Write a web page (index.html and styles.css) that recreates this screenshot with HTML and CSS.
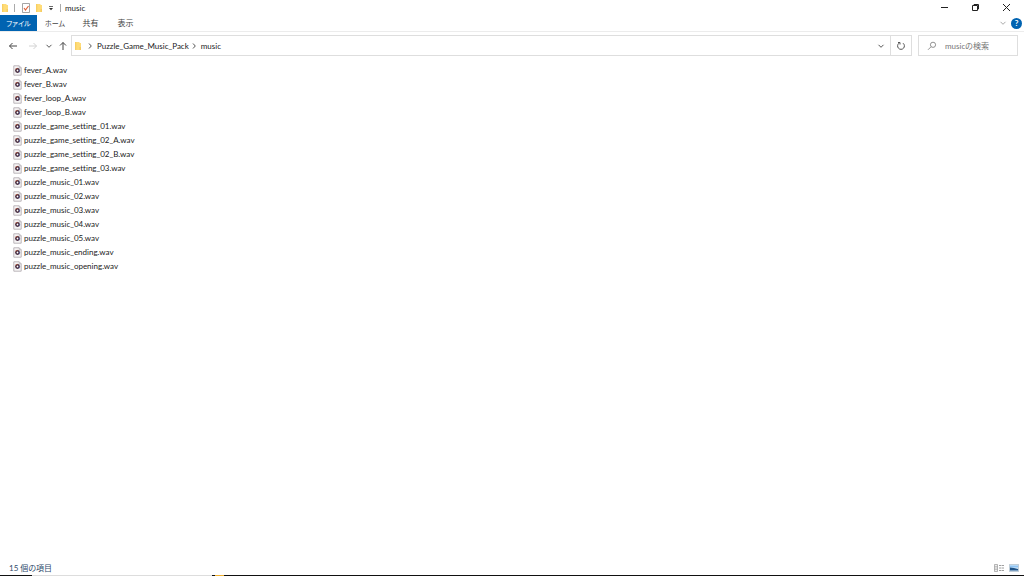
FILE: index.html
```
<!DOCTYPE html>
<html lang="ja">

<head>
  <meta charset="UTF-8">
  <meta name="viewport" content="width=device-width, initial-scale=1.0">
  <title>music</title>
  <link rel="stylesheet" href="styles.css">
</head>

<body>
  <!-- 共通アイコン -->
  <svg class="defs" aria-hidden="true">
    <symbol id="folder" viewBox="0 0 8 10">
      <path d="M1 1h4.500v1H7v7H1z" fill="#ffdc78" />
      <path d="M1 1h1.300v8H1z" fill="#f8cf62" />
      <path d="M5.500 6h1.500v3H5.500z" fill="#f6cc62" />
    </symbol>
    <symbol id="wav" viewBox="0 0 9 11">
      <path d="M.8.8h5.400l2 2v7.400h-7.400z" fill="#f7f5f6" stroke="#b5afb3" stroke-width=".9" />
      <path d="M6.200.8v2h2" fill="none" stroke="#b5afb3" stroke-width=".7" />
      <circle cx="4.500" cy="5.500" r="2.400" fill="#43283c" />
      <path d="M2.500 4.500a2.300 2.300 0 0 1 2-1.200" fill="none" stroke="#d0643c" stroke-width=".8" />
      <path d="M6.700 4.900a2.300 2.300 0 0 1-.8 2.400" fill="none" stroke="#5063a8" stroke-width=".8" />
      <circle cx="4.500" cy="5.500" r=".9" fill="#fff" />
    </symbol>
    <symbol id="chevron-down" viewBox="0 0 8 8">
      <path d="M1.500 2.800L4 5.300l2.500-2.500" fill="none" stroke="currentColor" />
    </symbol>
    <symbol id="chevron-right" viewBox="0 0 8 8">
      <path d="M3 1.500L5.300 4 3 6.500" fill="none" stroke="currentColor" />
    </symbol>
  </svg>

  <!-- タイトルバー -->
  <header class="titlebar">
    <div class="quick">
      <svg class="folder"><use href="#folder" /></svg>
      <span class="sep"></span>
      <button class="check" aria-label="プロパティ">
        <svg width="10" height="12" viewBox="0 0 10 12">
          <path d="M1.500 1.500h7v9h-7z" fill="#fff" stroke="#8e8e8e" stroke-width=".8" />
          <path d="M3 6l1.500 2L7.500 4" fill="none" stroke="#e0623a" stroke-width="1.200" />
        </svg>
      </button>
      <button class="new-folder" aria-label="新しいフォルダー"><svg class="folder"><use href="#folder" /></svg></button>
      <button class="customize" aria-label="カスタマイズ">
        <svg width="6" height="8" viewBox="0 0 6 8">
          <path d="M1 2.500h4" stroke="#444" stroke-width=".8" />
          <path d="M1 4h4L3 6.300z" fill="#333" />
        </svg>
      </button>
      <span class="sep"></span>
    </div>
    <h1 class="title">music</h1>
    <div class="window-buttons">
      <button aria-label="最小化">
        <svg width="9" height="9" viewBox="0 0 9 9"><path d="M1 4.500h7" stroke="#222" /></svg>
      </button>
      <button aria-label="元に戻す">
        <svg width="9" height="9" viewBox="0 0 9 9" fill="none" stroke="#222"><path d="M1.500 2.500h5v5h-5zM3 2.500v-1h4.500V6h-1" /></svg>
      </button>
      <button aria-label="閉じる">
        <svg width="9" height="9" viewBox="0 0 9 9"><path d="M1 1l7 7M8 1L1 8" stroke="#222" /></svg>
      </button>
    </div>
  </header>

  <!-- リボンのタブ -->
  <nav class="tabs">
    <button class="tab tab-file">ファイル</button>
    <button class="tab tab-home">ホーム</button>
    <button class="tab">共有</button>
    <button class="tab">表示</button>
    <div class="tabs-right">
      <button class="expand" aria-label="リボンの展開"><svg class="icon"><use href="#chevron-down" /></svg></button>
      <button class="help" aria-label="ヘルプ">?</button>
    </div>
  </nav>

  <!-- アドレスバー -->
  <div class="toolbar">
    <div class="nav">
      <button class="arrow" aria-label="戻る">
        <svg width="10" height="10" viewBox="0 0 10 10"><path d="M9 5H1.500M4.500 2l-3 3 3 3" fill="none" stroke="#444" /></svg>
      </button>
      <button class="arrow disabled" aria-label="進む" disabled>
        <svg width="10" height="10" viewBox="0 0 10 10"><path d="M1 5h7.500M5.500 2l3 3-3 3" fill="none" stroke="#d2d2d2" /></svg>
      </button>
      <button class="recent" aria-label="最近表示した場所"><svg class="icon"><use href="#chevron-down" /></svg></button>
      <button class="arrow" aria-label="上へ">
        <svg width="10" height="10" viewBox="0 0 10 10"><path d="M5 9V1.500M2 4.500l3-3 3 3" fill="none" stroke="#444" /></svg>
      </button>
    </div>
    <div class="address">
      <svg class="folder"><use href="#folder" /></svg>
      <svg class="icon"><use href="#chevron-right" /></svg>
      <a class="crumb" href="#">Puzzle_Game_Music_Pack</a>
      <svg class="icon"><use href="#chevron-right" /></svg>
      <a class="crumb" href="#">music</a>
      <button class="history" aria-label="以前の場所"><svg class="icon"><use href="#chevron-down" /></svg></button>
      <button class="refresh" aria-label="更新">
        <svg width="10" height="10" viewBox="0 0 10 10" fill="none" stroke="#555"><path d="M3 2.200A3.400 3.400 0 1 0 7 2.200M2 1.500h2v2" /></svg>
      </button>
    </div>
    <label class="search">
      <svg width="10" height="10" viewBox="0 0 10 10" fill="none" stroke="#777" stroke-width=".8"><circle cx="6" cy="3.800" r="2.600" /><path d="M4 5.800L1 8.800" /></svg>
      <input type="text" placeholder="musicの検索" aria-label="musicの検索">
    </label>
  </div>

  <!-- ファイル一覧 -->
  <main class="content">
    <ul class="files">
      <li><svg><use href="#wav" /></svg>fever_A.wav</li>
      <li><svg><use href="#wav" /></svg>fever_B.wav</li>
      <li><svg><use href="#wav" /></svg>fever_loop_A.wav</li>
      <li><svg><use href="#wav" /></svg>fever_loop_B.wav</li>
      <li><svg><use href="#wav" /></svg>puzzle_game_setting_01.wav</li>
      <li><svg><use href="#wav" /></svg>puzzle_game_setting_02_A.wav</li>
      <li><svg><use href="#wav" /></svg>puzzle_game_setting_02_B.wav</li>
      <li><svg><use href="#wav" /></svg>puzzle_game_setting_03.wav</li>
      <li><svg><use href="#wav" /></svg>puzzle_music_01.wav</li>
      <li><svg><use href="#wav" /></svg>puzzle_music_02.wav</li>
      <li><svg><use href="#wav" /></svg>puzzle_music_03.wav</li>
      <li><svg><use href="#wav" /></svg>puzzle_music_04.wav</li>
      <li><svg><use href="#wav" /></svg>puzzle_music_05.wav</li>
      <li><svg><use href="#wav" /></svg>puzzle_music_ending.wav</li>
      <li><svg><use href="#wav" /></svg>puzzle_music_opening.wav</li>
    </ul>
  </main>

  <!-- ステータスバー -->
  <footer class="status">
    <span>15 個の項目</span>
    <div class="views">
      <button aria-label="詳細表示">
        <svg width="10" height="8" viewBox="0 0 10 8">
          <path d="M.5.5h3v7h-3zM.5 2.800h3M.5 5.200h3" fill="#eee" stroke="#999" stroke-width=".7" />
          <path d="M5 1.500h2M7.500 1.500h2.500M5 4h2M7.500 4h2.500M5 6.500h2M7.500 6.500h2.500" stroke="#888" stroke-width=".8" />
        </svg>
      </button>
      <button aria-label="大アイコン表示">
        <svg width="10" height="8" viewBox="0 0 10 8">
          <path d="M.4.400h9.200v7.200H.4z" fill="#d9ebfa" stroke="#a9b7c4" stroke-width=".7" />
          <path d="M1 1.500h8v2H1z" fill="#8fc4f4" />
          <path d="M1 3.500l4 .5 4 1v1.500H1z" fill="#1f5387" />
        </svg>
      </button>
    </div>
  </footer>

  <!-- タスクバーの上端 -->
  <div class="taskbar"><span class="taskbar-search"></span><span class="taskbar-folder"></span></div>
</body>

</html>
```
FILE: styles.css
```
* {
  box-sizing: border-box;
}

body {
  margin: 0;
  min-height: 100vh;
  display: flex;
  flex-direction: column;
  background-color: #fff;
  color: #222;
  font-family: Lato, "Noto Sans CJK JP", sans-serif;
  font-size: 8px;
  line-height: 14px;
  /* かなを詰めて表示する */
  font-feature-settings: "palt";
  font-variant-ligatures: none;
}

button {
  display: flex;
  align-items: center;
  justify-content: center;
  padding: 0;
  border: 0;
  background: none;
  color: inherit;
  font: inherit;
  font-feature-settings: inherit;
}

svg {
  display: block;
  flex: none;
}

.defs {
  position: absolute;
  width: 0;
  height: 0;
}

.icon {
  width: 8px;
  height: 8px;
}

.folder {
  width: 8px;
  height: 10px;
}

/* タイトルバー ========*/
.titlebar {
  display: flex;
  align-items: center;
  height: 15px;
}

.quick {
  display: flex;
  align-items: center;
  padding-left: 1px;
}

.sep {
  width: 1px;
  height: 8px;
  background-color: #aaa;
}

.quick .sep:first-of-type {
  margin-left: 5px;
}

.check {
  margin-left: 6px;
}

.new-folder {
  margin-left: 4px;
}

.customize {
  margin: 0 6px 0 5px;
}

.title {
  margin: 0 0 0 4px;
  font-size: 8px;
  font-weight: normal;
}

.window-buttons {
  display: flex;
  margin-left: auto;
  padding-right: 2px;
}

.window-buttons button {
  width: 31px;
  height: 15px;
}

/* タブ ========*/
.tabs {
  display: flex;
  height: 17px;
  border-bottom: 1px solid #ececec;
  color: #444;
}

.tab {
  width: 35px;
  height: 16px;
}

.tab-file {
  width: 37px;
  background-color: #0063b1;
  color: #fff;
  font-size: 7px;
}

.tab-home {
  width: 36px;
  font-size: 7px;
}

.tabs-right {
  display: flex;
  align-items: center;
  gap: 4px;
  margin-left: auto;
  padding-right: 2px;
}

.expand {
  color: #aaa;
}

.help {
  width: 11px;
  height: 11px;
  border-radius: 50%;
  background-color: #0063b1;
  color: #fff;
  font-weight: bold;
}

/* アドレスバー ========*/
.toolbar {
  display: flex;
  align-items: center;
  padding: 3px 6px 3px 0;
  color: #555;
}

.nav {
  display: flex;
  align-items: center;
  width: 71px;
  padding-left: 8px;
}

.nav .disabled {
  margin-left: 10px;
}

.nav .recent {
  margin: 0 5px 0 7px;
}

.address {
  flex: 1;
  display: flex;
  align-items: center;
  height: 21px;
  padding-left: 2px;
  border: 1px solid #dedede;
}

.address > .icon {
  margin: 0 3px 0 1px;
}

.address > .folder + .icon {
  margin-left: 4px;
}

.crumb {
  color: #222;
  text-decoration: none;
}

.history {
  width: 19px;
  margin-left: auto;
}

.refresh {
  width: 21px;
  height: 19px;
  border-left: 1px solid #dedede;
}

.search {
  display: flex;
  align-items: center;
  gap: 8px;
  width: 100px;
  height: 21px;
  margin-left: 6px;
  padding-left: 8px;
  border: 1px solid #dedede;
}

.search input {
  flex: 1;
  min-width: 0;
  padding: 0;
  border: 0;
  outline: 0;
  font: inherit;
  font-feature-settings: inherit;
}

.search input::placeholder {
  color: #757575;
}

/* ファイル一覧 ========*/
.content {
  flex: 1;
  padding: 4px 13px;
}

.files {
  margin: 0;
  padding: 0;
  list-style: none;
}

.files li {
  display: flex;
  align-items: center;
  gap: 2px;
  height: 14px;
}

.files svg {
  width: 9px;
  height: 11px;
}

/* ステータスバー ========*/
.status {
  display: flex;
  align-items: center;
  justify-content: space-between;
  padding: 0 5px 0 9px;
  color: #2f4a6b;
}

.views {
  display: flex;
  gap: 5px;
}

/* タスクバー ========*/
.taskbar {
  display: flex;
  height: 1px;
  padding-left: 32px;
  background-color: #111;
}

.taskbar-search {
  width: 180px;
  background-color: #ddd;
}

.taskbar-folder {
  width: 9px;
  margin-left: 3px;
  background-color: #f0b030;
}
```
